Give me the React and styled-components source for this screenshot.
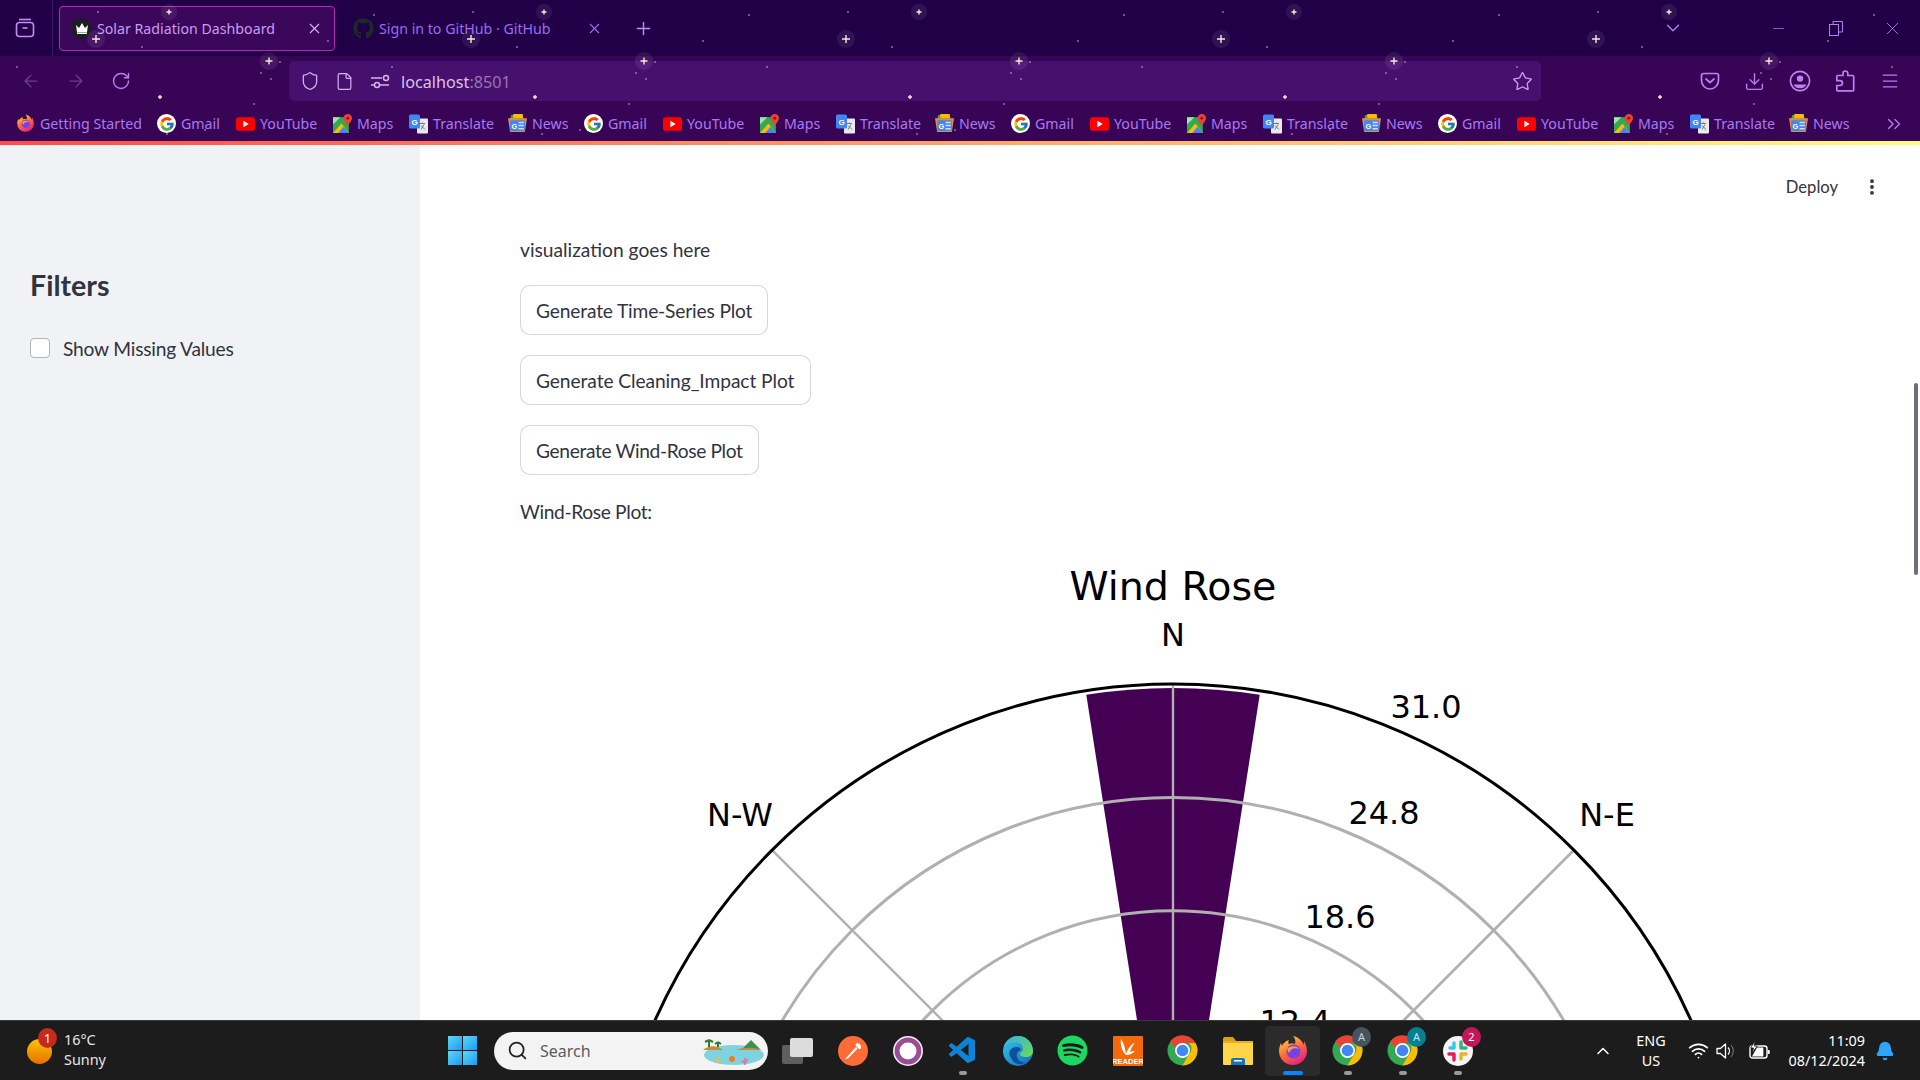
import React from 'react';
import styled, { createGlobalStyle } from 'styled-components';
import {
  ArrowLeft, ArrowRight, RotateCw, X, Plus, ChevronDown, Minus, Shield, File, Star, Download,
  Menu, ChevronsRight, Search, Wifi, ChevronUp, Bell, EllipsisVertical,
} from 'lucide-react';
import { FcGoogle } from 'react-icons/fc';
import { FaGithub, FaSpotify } from 'react-icons/fa';
import { VscVscode } from 'react-icons/vsc';

const Global = createGlobalStyle`
  html, body { margin: 0; padding: 0; height: 100%; overflow: hidden; background: #fff; }
  * { box-sizing: border-box; }
`;

const uiFont = `"Noto Sans", "Open Sans", sans-serif`;
const pageFont = `Lato, "Noto Sans", sans-serif`;

const Page = styled.div`
  width: 1920px;
  height: 1080px;
  display: flex;
  flex-direction: column;
  overflow: hidden;
  font-family: ${uiFont};
`;

/* browser chrome */
const Chrome = styled.header`
  position: relative;
  height: 141px;
  flex: none;
  background: #380556;
`;
const StarLayer = styled.svg`
  position: absolute;
  inset: 0;
  width: 100%;
  height: 100%;
  pointer-events: none;
`;
const TabStrip = styled.div`
  height: 56px;
  background: #210048;
  display: flex;
  align-items: center;
  color: #b77bf0;
`;
const TabListButton = styled.div`
  width: 53px;
  height: 100%;
  display: flex;
  align-items: center;
  justify-content: center;
  border-right: 1px solid #3c1668;
  padding-right: 3px;
`;
const Tab = styled.div`
  width: ${p => p.$w}px;
  height: 45px;
  margin-left: ${p => p.$ml}px;
  padding-left: ${p => p.$pl}px;
  padding-right: ${p => p.$pr}px;
  display: flex;
  align-items: center;
  border-radius: 4px;
  border: 1px solid ${p => (p.$active ? '#b02bb4' : 'transparent')};
  background: ${p => (p.$active ? '#3b075b' : 'transparent')};
  color: ${p => (p.$active ? '#c79df2' : '#9a6cf0')};
  font-size: 14.2px;
  white-space: nowrap;
`;
const Favicon = styled.div`
  width: 21px;
  height: 21px;
  flex: none;
  margin-right: 5px;
  border-radius: 50%;
  background: ${p => p.$bg || 'transparent'};
  display: flex;
  align-items: center;
  justify-content: center;
`;
const TabTitle = styled.span`
  flex: 1;
`;
const StripIcons = styled.div`
  margin-left: auto;
  display: flex;
  align-items: center;
`;
const Slot = styled.div`
  width: ${p => p.$w || 45}px;
  flex: none;
  display: flex;
  align-items: center;
  justify-content: center;
  color: ${p => p.$c || 'inherit'};
`;
const NavBar = styled.div`
  height: 45px;
  padding: 5px 8px 0;
  display: grid;
  grid-template-columns: 281px 1252px 1fr;
  color: #bb7cee;
`;
const NavGroup = styled.div`
  display: flex;
  align-items: center;
  justify-content: ${p => (p.$end ? 'flex-end' : 'flex-start')};
`;
const UrlBar = styled.div`
  background: #46106f;
  border-radius: 5px;
  display: flex;
  align-items: center;
  padding-left: 3px;
  color: #cfa8e6;
  font-size: 16.2px;
`;
const UrlHost = styled.span`
  color: #dcc0ea;
  margin-left: 4px;
  margin-top: 1px;
`;
const UrlPort = styled.span`
  color: #9876ad;
`;
const UrlStar = styled.div`
  margin-left: auto;
  width: 38px;
  display: flex;
  justify-content: center;
`;
const BookmarkBar = styled.nav`
  height: 40px;
  padding-left: 16px;
  padding-top: 5px;
  display: flex;
  align-items: center;
  color: #a77af2;
  font-size: 14.2px;
  white-space: nowrap;
  position: relative;
`;
const Bookmark = styled.div`
  width: ${p => p.$w}px;
  flex: none;
  display: flex;
  align-items: center;
  gap: 5px;
`;
const BookmarkIcon = styled.div`
  width: 19px;
  height: 19px;
  flex: none;
  display: flex;
  align-items: center;
  justify-content: center;
  background: ${p => (p.$round ? '#fff' : 'transparent')};
  border-radius: 50%;
`;
const MoreBookmarks = styled.div`
  position: absolute;
  left: 1883px;
  top: 12px;
  color: #b77bf0;
`;
const Decoration = styled.div`
  height: 4px;
  flex: none;
  background: linear-gradient(90deg, #ff4b4b, #fffd80);
`;

/* streamlit page */
const Body = styled.div`
  flex: 1;
  min-height: 0;
  display: flex;
  position: relative;
  overflow: hidden;
  font-family: ${pageFont};
  color: #31333f;
`;
const Sidebar = styled.aside`
  width: 420px;
  flex: none;
  background: #f0f2f6;
  padding: 120px 30px 0;
`;
const SidebarTitle = styled.h2`
  margin: 0;
  font-size: 28.6px;
  line-height: 40px;
  font-weight: 700;
`;
const CheckRow = styled.label`
  margin-top: 32px;
  display: flex;
  align-items: center;
  gap: 13px;
  font-size: 19.2px;
  letter-spacing: -0.2px;
  line-height: 24px;
`;
const CheckBox = styled.span`
  width: 20px;
  height: 20px;
  margin-top: -2px;
  border: 1px solid #b0b2ba;
  border-radius: 4px;
  background: #fff;
`;
const Main = styled.main`
  flex: 1;
  min-width: 0;
  background: #fff;
  overflow: hidden;
`;
const TopBar = styled.div`
  height: 84px;
  padding-right: 38px;
  display: flex;
  align-items: center;
  justify-content: flex-end;
  gap: 24px;
  font-size: 16.6px;
`;
const Content = styled.div`
  padding-left: 100px;
  display: flex;
  flex-direction: column;
  align-items: flex-start;
`;
const Line = styled.p`
  margin: ${p => p.$mt}px 0 0;
  font-size: 19.2px;
  letter-spacing: ${p => p.$ls || 0}px;
  line-height: 32px;
`;
const ButtonStack = styled.div`
  margin-top: 19px;
  display: flex;
  flex-direction: column;
  align-items: flex-start;
  gap: 20px;
`;
const PlotButton = styled.button`
  height: 50px;
  width: ${p => p.$w}px;
  padding: 0 0 0 15px;
  text-align: left;
  background: #fff;
  border: 1px solid rgba(49, 51, 63, 0.2);
  border-radius: 10px;
  color: #31333f;
  font-family: ${pageFont};
  font-size: 19.2px;
  letter-spacing: ${p => p.$ls}px;
  white-space: nowrap;
`;
const ChartSvg = styled.svg`
  display: block;
  margin-top: 12px;
  flex: none;
  font-family: "DejaVu Sans", sans-serif;
`;
const ScrollThumb = styled.div`
  position: absolute;
  right: 2px;
  top: 238px;
  width: 4px;
  height: 192px;
  border-radius: 2px;
  background: #6d6f78;
`;

/* taskbar */
const Taskbar = styled.footer`
  height: 60px;
  flex: none;
  background: #1c1c1c;
  border-top: 1px solid #3a3a3a;
  display: flex;
  align-items: center;
  color: #fff;
  font-size: 14.4px;
  position: relative;
`;
const Weather = styled.div`
  width: 448px;
  flex: none;
  padding-left: 27px;
  display: flex;
  align-items: center;
  gap: 12px;
`;
const Sun = styled.div`
  position: relative;
  width: 25px;
  height: 25px;
  border-radius: 50%;
  background: linear-gradient(180deg, #ffc400, #e66f00);
  margin-top: 2px;
`;
const Badge = styled.span`
  position: absolute;
  left: 11px;
  top: -11px;
  width: 19px;
  height: 20px;
  border-radius: 50%;
  background: #c42b1c;
  font-size: 13px;
  line-height: 20px;
  text-align: center;
  color: #fff;
`;
const WeatherText = styled.div`
  line-height: 20px;
  margin-top: -2px;
  color: #e6e6e6;
`;
const StartButton = styled.div`
  width: 29px;
  height: 29px;
  flex: none;
  display: grid;
  grid-template-columns: 1fr 1fr;
  grid-template-rows: 1fr 1fr;
  gap: 1px;
`;
const StartPane = styled.span`
  background: linear-gradient(135deg, #5fd6fb, #1a9cf0);
`;
const SearchBox = styled.div`
  width: 274px;
  height: 38px;
  margin-left: 17px;
  margin-right: 2px;
  border-radius: 19px;
  background: #f3f3f3;
  color: #1a1a1a;
  display: flex;
  align-items: center;
  padding-left: 13px;
  gap: 12px;
  font-size: 16px;
  flex: none;
  position: relative;
`;
const SearchText = styled.span`
  color: #5b5b5b;
`;
const SearchArt = styled.svg`
  position: absolute;
  right: 2px;
  top: 3px;
`;
const AppSlot = styled.div`
  position: relative;
  width: 55px;
  height: 50px;
  flex: none;
  display: flex;
  align-items: center;
  justify-content: center;
  border-radius: 4px;
  background: ${p => (p.$active ? '#2b2b2b' : 'transparent')};
`;
const RunPip = styled.span`
  position: absolute;
  bottom: 1px;
  left: 50%;
  transform: translateX(-50%);
  width: ${p => (p.$active ? 20 : 8)}px;
  height: 4px;
  border-radius: 2px;
  background: ${p => (p.$active ? '#0a84ff' : '#9a9a9a')};
`;
const AppBadge = styled.span`
  position: absolute;
  right: 4px;
  top: 1px;
  width: 19px;
  height: 20px;
  border-radius: 50%;
  background: ${p => p.$bg};
  font-size: 11px;
  line-height: 20px;
  text-align: center;
  color: ${p => p.$c};
`;
const Tray = styled.div`
  margin-left: auto;
  display: flex;
  align-items: center;
`;
const TrayText = styled.div`
  text-align: ${p => p.$align};
  line-height: 20px;
  font-size: 14.4px;
  width: ${p => p.$w}px;
  white-space: nowrap;
`;

const StarField = () => {
  const glow = [[96, 39, 9], [269, 61, 9], [169, 12, 8]];
  const plus = [[96, 39, 4], [269, 61, 3.5], [169, 12, 2.5], [160, 97, 2]];
  const dots = [[98, 12], [374, 15], [142, 47], [328, 41], [280, 62], [261, 73], [271, 79], [17, 67], [254, 104], [167, 134], [22, 142], [205, 130]];
  return (
    <StarLayer>
      <defs>
        <pattern id="stars" x="0" y="0" width="375" height="145" patternUnits="userSpaceOnUse">
          {glow.map(([x, y, r]) => <circle key={`g${x}`} cx={x} cy={y} r={r} fill="#fff" opacity="0.07" />)}
          {plus.map(([x, y, r]) => (
            <path key={`p${x}`} d={`M${x - r} ${y}H${x + r}M${x} ${y - r}V${y + r}`} stroke="#f4e9d8" strokeWidth="1.4" />
          ))}
          {dots.map(([x, y]) => <circle key={`d${x}`} cx={x} cy={y} r="0.8" fill="#cdbfd0" />)}
        </pattern>
      </defs>
      <rect width="100%" height="100%" fill="url(#stars)" />
    </StarLayer>
  );
};

const TabsIcon = () => (
  <svg width="20" height="20" viewBox="0 0 20 20" fill="none" stroke="#c58af5" strokeWidth="1.6">
    <path d="M4 1.5h12" />
    <rect x="1.5" y="4.5" width="17" height="14" rx="3" />
    <path d="M7.5 10h5" />
  </svg>
);

const PermIcon = () => (
  <svg width="20" height="16" viewBox="0 0 20 16" fill="none" stroke="#d6b4ea" strokeWidth="1.5">
    <path d="M1 5h11M1 12h3" />
    <circle cx="16" cy="5" r="2.5" />
    <circle cx="7" cy="12" r="2.5" />
    <path d="M10 12h9" />
  </svg>
);

const PocketIcon = () => (
  <svg width="20" height="20" viewBox="0 0 20 20" fill="none" stroke="#c080f0" strokeWidth="1.7" strokeLinecap="round" strokeLinejoin="round">
    <path d="M3.5 2.5h13a2 2 0 0 1 2 2v5a8.5 8.5 0 0 1-17 0v-5a2 2 0 0 1 2-2z" />
    <path d="M6 8l4 3.5L14 8" />
  </svg>
);

const ProfileIcon = () => (
  <svg width="22" height="22" viewBox="0 0 22 22" fill="none" stroke="#c080f0" strokeWidth="1.7">
    <circle cx="11" cy="11" r="9.6" />
    <circle cx="11" cy="8.6" r="3.2" fill="#c080f0" stroke="none" />
    <path d="M4.5 14.4h13a7.4 7.4 0 0 1-13 0z" fill="#c080f0" stroke="none" />
  </svg>
);

const PuzzleIcon = () => (
  <svg width="20" height="22" viewBox="0 0 20 22" fill="none" stroke="#c080f0" strokeWidth="1.7" strokeLinejoin="round">
    <path d="M8 5.5V3.4a2.4 2.4 0 0 1 4.8 0v2.1H17.5a1.2 1.2 0 0 1 1.2 1.2v13a1.2 1.2 0 0 1-1.2 1.2H3a1.2 1.2 0 0 1-1.2-1.2v-4.2H5a2.4 2.4 0 0 0 0-4.8H1.8V6.7A1.2 1.2 0 0 1 3 5.5z" />
  </svg>
);

const SpeakerIcon = () => (
  <svg width="22" height="18" viewBox="0 0 22 18" fill="none" stroke="#fff" strokeLinejoin="round">
    <path d="M1 6.5h3.4L9.5 2v14l-5.1-4.5H1z" strokeWidth="1.3" />
    <path d="M12 5.5a5 5 0 0 1 0 7" strokeWidth="1.3" />
    <path d="M15 3a9 9 0 0 1 0 12" strokeWidth="1.1" stroke="#777" />
  </svg>
);

const BatteryIcon = () => (
  <svg width="22" height="20" viewBox="0 0 22 20" fill="none">
    <rect x="1" y="5" width="17" height="12" rx="2.5" stroke="#fff" strokeWidth="1.4" />
    <rect x="18.6" y="9" width="2.2" height="4" rx="1" fill="#fff" />
    <path d="M3 15.4L8 6.6h6.4v8.8z" fill="#fff" />
    <path d="M6 0L1.6 7h3L3 12l5.4-7H5.2z" fill="#fff" stroke="#1c1c1c" strokeWidth="0.8" />
  </svg>
);

const FirefoxLogo = ({ size = 19 }) => (
  <svg width={size} height={size} viewBox="0 0 32 32">
    <defs>
      <linearGradient id="ffa" x1="0.2" y1="0" x2="0.8" y2="1">
        <stop offset="0" stopColor="#ffd53a" />
        <stop offset="0.45" stopColor="#ff7139" />
        <stop offset="1" stopColor="#e31587" />
      </linearGradient>
    </defs>
    <path fill="url(#ffa)" d="M27 6c1 2 3 6 3 10a14 14 0 1 1-28 0c0-3 1-6 2-8l1 3c1-2 3-5 7-6-1 2-1 3 0 4 2-1 4-1 6 0 1-3 0-6-2-8 6 1 9 5 11 9z" />
    <circle cx="16.5" cy="16.5" r="7" fill="#7542e5" />
    <path fill="#ff9a3a" d="M10 14c3-3 9-4 12 0-3-1-6-1-8 1l-2 3z" />
  </svg>
);

const YouTubeIcon = () => (
  <svg width="19" height="14" viewBox="0 0 18 13">
    <rect width="18" height="13" rx="3" fill="#f00" />
    <path d="M7 3.5l5 3-5 3z" fill="#fff" />
  </svg>
);

const MapsIcon = () => (
  <svg width="19" height="19" viewBox="0 0 18 18">
    <rect y="3" width="15" height="15" fill="#34a853" />
    <path d="M0 18L8 9l7 9z" fill="#fbbc04" />
    <path d="M5 18l5-6 5 6z" fill="#4285f4" />
    <path d="M0 3h7L0 10z" fill="#9fe6a0" />
    <path d="M14 0a4 4 0 0 1 4 4c0 3-4 6-4 7 0-1-4-4-4-7a4 4 0 0 1 4-4z" fill="#ea4335" />
    <circle cx="14" cy="4" r="1.4" fill="#8a1c12" />
  </svg>
);

const TranslateIcon = () => (
  <svg width="20" height="20" viewBox="0 0 19 19">
    <rect x="8" y="4" width="11" height="15" rx="1" fill="#e8eaed" />
    <path d="M11 9h5M13.5 8v1M12 15l3-5M12 11l4 4" stroke="#777" strokeWidth="1" />
    <rect width="11" height="14" rx="1.5" fill="#4285f4" />
    <text x="5.5" y="10" fontSize="8" fontWeight="700" textAnchor="middle" fill="#fff" fontFamily="Liberation Sans">G</text>
  </svg>
);

const NewsIcon = () => (
  <svg width="19" height="19" viewBox="0 0 18 18">
    <path d="M3 1h11l1 4H2z" fill="#34a853" />
    <path d="M5 0h9v4H5z" fill="#fbbc04" />
    <path d="M0 4h18l-2 13H2z" fill="#ea8a3a" />
    <rect x="2" y="6" width="14" height="10" rx="1" fill="#4285f4" />
    <text x="6" y="14" fontSize="7" fontWeight="700" fill="#fff" textAnchor="middle" fontFamily="Liberation Sans">G</text>
    <path d="M10 8h5M10 11h5M10 14h5" stroke="#cfe0fc" strokeWidth="1.4" />
  </svg>
);

const GoogleMark = () => (
  <BookmarkIcon $round>
    <FcGoogle size={16} />
  </BookmarkIcon>
);

const marks = [
  { key: 'gmail', label: 'Gmail', w: 79, icon: <GoogleMark /> },
  { key: 'yt', label: 'YouTube', w: 97, icon: <BookmarkIcon><YouTubeIcon /></BookmarkIcon> },
  { key: 'maps', label: 'Maps', w: 76, icon: <BookmarkIcon><MapsIcon /></BookmarkIcon> },
  { key: 'translate', label: 'Translate', w: 99, icon: <BookmarkIcon><TranslateIcon /></BookmarkIcon> },
  { key: 'news', label: 'News', w: 76, icon: <BookmarkIcon><NewsIcon /></BookmarkIcon> },
];

const ChromeLogo = () => (
  <svg width="31" height="31" viewBox="0 0 32 32">
    <circle cx="16" cy="16" r="15.5" fill="#34a853" />
    <path d="M16 .5a15.5 15.5 0 0 1 13.4 7.8H16a7.7 7.7 0 0 0-7.3 5.2L3.4 6.4A15.5 15.5 0 0 1 16 .5z" fill="#ea4335" />
    <path d="M29.4 8.3A15.5 15.5 0 0 1 16 31.5l6.7-11.6A7.7 7.7 0 0 0 22.6 8.3z" fill="#fbbc04" />
    <circle cx="16" cy="16" r="7.7" fill="#fff" />
    <circle cx="16" cy="16" r="6" fill="#4285f4" />
  </svg>
);

const TaskViewIcon = () => (
  <svg width="31" height="26" viewBox="0 0 31 26">
    <rect x="0" y="7" width="21" height="19" rx="2" fill="#5f5f5f" />
    <rect x="8" y="0" width="23" height="19" rx="2" fill="#dcdcdc" />
  </svg>
);

const PostmanIcon = () => (
  <svg width="30" height="30" viewBox="0 0 30 30">
    <circle cx="15" cy="15" r="15" fill="#ff6c37" />
    <path d="M8 22l10-11 1.6 1.6L10 22.4l-3 .8z" fill="#fff" />
    <path d="M18 7.5a4 4 0 0 1 5 5l-2 .5-3.500-3.500z" fill="#fff" />
  </svg>
);

const RingIcon = () => (
  <svg width="30" height="30" viewBox="0 0 30 30">
    <circle cx="15" cy="15" r="15" fill="#f4eef4" />
    <circle cx="15" cy="15" r="13.4" fill="#9a4c96" />
    <circle cx="15" cy="15" r="8.5" fill="#fff" />
  </svg>
);

const EdgeIcon = () => (
  <svg width="30" height="30" viewBox="0 0 30 30">
    <defs>
      <linearGradient id="edg" x1="0" y1="0" x2="1" y2="1">
        <stop offset="0" stopColor="#36c8e8" />
        <stop offset="1" stopColor="#0f6bbd" />
      </linearGradient>
      <linearGradient id="edg2" x1="0" y1="0" x2="1" y2="1">
        <stop offset="0" stopColor="#32b4e8" />
        <stop offset="1" stopColor="#6ed950" />
      </linearGradient>
    </defs>
    <circle cx="15" cy="15" r="15" fill="url(#edg)" />
    <path d="M15 0a15 15 0 0 1 15 15c0 5-4 6-7 6-5 0-6-2-6-3 0-2 3-2 3-5 0-4-3-7-8-7C7 6 2 9 1 11 3 4 9 0 15 0z" fill="url(#edg2)" />
    <path d="M8 22c-4-6 0-11 6-11 3 0 4 2 4 3-3 1-6 4-3 9 2 3 5 4 8 3-3 3-11 4-15-4z" fill="#0d4f9c" />
  </svg>
);

const ReaderIcon = () => (
  <svg width="30" height="30" viewBox="0 0 30 30">
    <rect width="30" height="30" rx="1" fill="#f46a0b" />
    <path d="M8 3c3 4 4 9 5 15 2-6 5-9 9-12-3 5-4 7-5 10 2-1 3-1 5-1-3 3-6 4-9 4C9 15 7 9 8 3z" fill="#fff" />
    <text x="15" y="28" fontSize="7.6" fontWeight="700" textAnchor="middle" fill="#fff" fontFamily="Liberation Sans">READER</text>
  </svg>
);

const FolderIcon = () => (
  <svg width="30" height="30" viewBox="0 0 30 30">
    <path d="M0 3a2 2 0 0 1 2-2h8l3 4H0z" fill="#dba20f" />
    <rect y="5" width="30" height="24" rx="1" fill="#ffd54a" />
    <rect y="5" width="30" height="2" fill="#e8ae1c" />
    <path d="M8 29v-5a2 2 0 0 1 2-2h10a2 2 0 0 1 2 2v5z" fill="#1573c2" />
    <rect x="11" y="24" width="8" height="1.5" fill="#fff" />
  </svg>
);

const SlackIcon = () => (
  <svg width="30" height="30" viewBox="0 0 30 30">
    <circle cx="15" cy="15" r="15" fill="#f5f5f5" />
    <g strokeWidth="3.4" strokeLinecap="round">
      <path d="M11 7v5M7 12h4" stroke="#36c5f0" />
      <path d="M18 6v6M18 12h5" stroke="#2eb67d" />
      <path d="M18 23v-5M18 18h5" stroke="#ecb22e" />
      <path d="M11 24v-6M6 18h5" stroke="#e01e5a" />
    </g>
  </svg>
);

const IslandArt = () => (
  <SearchArt width="66" height="32" viewBox="0 0 66 32">
    <ellipse cx="34" cy="20" rx="30" ry="10" fill="#7fd3e0" />
    <path d="M3 15c6-5 14-5 20 0z" fill="#c98a3a" />
    <path d="M42 14l9-9 9 9z" fill="#3c8f4f" />
    <path d="M36 15c8-3 18-3 26 0z" fill="#c98a3a" />
    <path d="M9 12V5M9 5l-4 2M9 5l4 2M18 12V7M18 7l-3 2M18 7l3 2" stroke="#2e7d32" strokeWidth="2" />
    <circle cx="32" cy="24" r="3" fill="#ef7d21" />
    <path d="M45 30v-7M42 26l3 2 3-4" stroke="#ec6fa0" strokeWidth="1.6" fill="none" />
    <path d="M15 28l3-5 3 5" stroke="#e8c04a" strokeWidth="1.6" fill="none" />
  </SearchArt>
);

const apps = [
  { key: 'view', icon: <TaskViewIcon /> },
  { key: 'postman', icon: <PostmanIcon /> },
  { key: 'ring', icon: <RingIcon /> },
  { key: 'code', icon: <VscVscode size={32} color="#0f84d6" />, run: true },
  { key: 'edge', icon: <EdgeIcon /> },
  { key: 'spotify', icon: <FaSpotify size={31} color="#1ed760" /> },
  { key: 'reader', icon: <ReaderIcon /> },
  { key: 'chrome', icon: <ChromeLogo /> },
  { key: 'folder', icon: <FolderIcon /> },
  { key: 'firefox', icon: <FirefoxLogo size={32} />, active: true },
  { key: 'chromeA', icon: <ChromeLogo />, run: true, badge: { text: 'A', bg: '#47535d', c: '#c8d0d6' } },
  { key: 'chromeB', icon: <ChromeLogo />, run: true, badge: { text: 'A', bg: '#067f90', c: '#bfeaf0' } },
  { key: 'slack', icon: <SlackIcon />, run: true, badge: { text: '2', bg: '#c2185b', c: '#fff' } },
];

// the wind rose is drawn around its real origin, most of it is cut by the page fold
const cx = 653;
const cy = 711;
const outer = 567;
const step = outer / 5;
const ticks = [
  { label: '31.0', x: 906, y: 169 },
  { label: '24.8', x: 864, y: 275 },
  { label: '18.6', x: 820, y: 379 },
  { label: '12.4', x: 775, y: 484 },
];
const spokes = [45, -45, 90, 135, 0];

const WindRose = () => {
  const barR = 563;
  const half = (8.86 * Math.PI) / 180;
  const bx = barR * Math.sin(half);
  const by = barR * Math.cos(half);
  return (
    <ChartSvg width="1306" height="1340" viewBox="0 0 1306 1340">
      <text x={cx} y="49" fontSize="39.6" textAnchor="middle" dominantBaseline="middle" fill="#000">Wind Rose</text>
      <text x={cx} y="97" fontSize="32" textAnchor="middle" dominantBaseline="middle" fill="#000">N</text>
      <text x="220" y="277" fontSize="32" textAnchor="middle" dominantBaseline="middle" fill="#000">N-W</text>
      <text x="1087" y="277" fontSize="32" textAnchor="middle" dominantBaseline="middle" fill="#000">N-E</text>
      <path
        d={`M${cx} ${cy}L${cx - bx} ${cy - by}A${barR} ${barR} 0 0 1 ${cx + bx} ${cy - by}Z`}
        fill="#440154"
      />
      {[1, 2, 3, 4].map(n => (
        <circle key={n} cx={cx} cy={cy} r={step * n} fill="none" stroke="#b0b0b0" strokeWidth="3" />
      ))}
      {spokes.map(a => {
        const rad = (a * Math.PI) / 180;
        return (
          <line
            key={a}
            x1={cx - outer * Math.sin(rad)}
            y1={cy - outer * Math.cos(rad)}
            x2={cx + outer * Math.sin(rad)}
            y2={cy + outer * Math.cos(rad)}
            stroke="#b0b0b0"
            strokeWidth="2.4"
          />
        );
      })}
      <circle cx={cx} cy={cy} r={outer} fill="none" stroke="#000" strokeWidth="3" />
      {ticks.map(t => (
        <text key={t.label} x={t.x} y={t.y} fontSize="32" textAnchor="middle" dominantBaseline="middle" fill="#000">{t.label}</text>
      ))}
    </ChartSvg>
  );
};

export default function App() {
  const repeats = [0, 1, 2];
  return (
    <Page>
      <Global />
      <Chrome>
        <TabStrip>
          <TabListButton><TabsIcon /></TabListButton>
          <Tab $active $w={276} $ml={6} $pl={11} $pr={11}>
            <Favicon $bg="#1d1d24">
              <svg width="14" height="11" viewBox="0 0 14 11"><path d="M1 2l3 3 3-5 3 5 3-3-1 7H2z" fill="#fff" /><rect x="2" y="9.400" width="10" height="1.600" fill="#fff" /></svg>
            </Favicon>
            <TabTitle>Solar Radiation Dashboard</TabTitle>
            <X size={17} strokeWidth={1.5} color="#d9b6f2" />
          </Tab>
          <Tab $w={278} $ml={5} $pl={12} $pr={14}>
            <Favicon><FaGithub size={21} color="#1c2b26" /></Favicon>
            <TabTitle>Sign in to GitHub · GitHub</TabTitle>
            <X size={17} strokeWidth={1.5} />
          </Tab>
          <Slot $w={50}><Plus size={21} strokeWidth={1.6} color="#c58af5" /></Slot>
          <StripIcons>
            <Slot $w={55}><ChevronDown size={22} strokeWidth={1.5} /></Slot>
            <Slot $w={50} />
            <Slot $w={57}><Minus size={17} strokeWidth={1} /></Slot>
            <Slot $w={57}>
              <svg width="14" height="15" viewBox="0 0 14 15" fill="none" stroke="currentColor" strokeWidth="1"><rect x="0.5" y="3.500" width="9" height="11" /><path d="M4 3V.5h9.500V11H10" /></svg>
            </Slot>
            <Slot $w={56}><X size={21} strokeWidth={1} /></Slot>
          </StripIcons>
        </TabStrip>
        <NavBar>
          <NavGroup>
            <Slot $c="#6f3f8f"><ArrowLeft size={20} strokeWidth={1.5} /></Slot>
            <Slot $c="#6f3f8f"><ArrowRight size={20} strokeWidth={1.5} /></Slot>
            <Slot><RotateCw size={20} strokeWidth={1.7} /></Slot>
          </NavGroup>
          <UrlBar>
            <Slot $w={35} $c="#d6b4ea"><Shield size={20} strokeWidth={1.5} /></Slot>
            <Slot $w={35} $c="#d6b4ea"><File size={19} strokeWidth={1.5} /></Slot>
            <Slot $w={35}><PermIcon /></Slot>
            <UrlHost>localhost<UrlPort>:8501</UrlPort></UrlHost>
            <UrlStar><Star size={21} strokeWidth={1.5} color="#cf9af0" /></UrlStar>
          </UrlBar>
          <NavGroup $end>
            <Slot><PocketIcon /></Slot>
            <Slot><Download size={21} strokeWidth={1.6} /></Slot>
            <Slot><ProfileIcon /></Slot>
            <Slot><PuzzleIcon /></Slot>
            <Slot><Menu size={20} strokeWidth={1.5} /></Slot>
          </NavGroup>
        </NavBar>
        <BookmarkBar>
          <Bookmark $w={141}>
            <BookmarkIcon><FirefoxLogo /></BookmarkIcon>
            Getting Started
          </Bookmark>
          {repeats.map(r => marks.map(m => (
            <Bookmark key={`${r}-${m.key}`} $w={m.w}>{m.icon}{m.label}</Bookmark>
          )))}
          {marks.slice(0, 4).map(m => (
            <Bookmark key={`last-${m.key}`} $w={m.w}>{m.icon}{m.label}</Bookmark>
          ))}
          <Bookmark $w={60}>{marks[4].icon}{marks[4].label}</Bookmark>
          <MoreBookmarks><ChevronsRight size={22} strokeWidth={1.5} /></MoreBookmarks>
        </BookmarkBar>
        <StarField />
      </Chrome>
      <Decoration />
      <Body>
        <Sidebar>
          <SidebarTitle>Filters</SidebarTitle>
          <CheckRow><CheckBox />Show Missing Values</CheckRow>
        </Sidebar>
        <Main>
          <TopBar>
            <span>Deploy</span>
            <EllipsisVertical size={20} strokeWidth={2.6} color="#31333f" />
          </TopBar>
          <Content>
            <Line $mt={5}>visualization goes here</Line>
            <ButtonStack>
              <PlotButton $w={248} $ls={-0.16}>Generate Time-Series Plot</PlotButton>
              <PlotButton $w={291} $ls={-0.08}>Generate Cleaning_Impact Plot</PlotButton>
              <PlotButton $w={239} $ls={-0.36}>Generate Wind-Rose Plot</PlotButton>
            </ButtonStack>
            <Line $mt={21} $ls={-0.35}>Wind-Rose Plot:</Line>
            <WindRose />
          </Content>
        </Main>
        <ScrollThumb />
      </Body>
      <Taskbar>
        <Weather>
          <Sun><Badge>1</Badge></Sun>
          <WeatherText>16°C<br />Sunny</WeatherText>
        </Weather>
        <StartButton>
          <StartPane /><StartPane /><StartPane /><StartPane />
        </StartButton>
        <SearchBox>
          <Search size={21} strokeWidth={2} color="#222" />
          <SearchText>Search</SearchText>
          <IslandArt />
        </SearchBox>
        {apps.map(a => (
          <AppSlot key={a.key} $active={a.active}>
            {a.icon}
            {a.badge && <AppBadge $bg={a.badge.bg} $c={a.badge.c}>{a.badge.text}</AppBadge>}
            {(a.run || a.active) && <RunPip $active={a.active} />}
          </AppSlot>
        ))}
        <Tray>
          <Slot $w={30}><ChevronUp size={20} strokeWidth={1.8} /></Slot>
          <TrayText $align="center" $w={66}>ENG<br />US</TrayText>
          <Slot $w={28}><Wifi size={21} strokeWidth={2} /></Slot>
          <Slot $w={30}><SpeakerIcon /></Slot>
          <Slot $w={36}><BatteryIcon /></Slot>
          <TrayText $align="right" $w={87}>11:09<br />08/12/2024</TrayText>
          <Slot $w={40}><Bell size={20} fill="#2ea6ff" color="#2ea6ff" /></Slot>
          <Slot $w={15} />
        </Tray>
      </Taskbar>
    </Page>
  );
}
